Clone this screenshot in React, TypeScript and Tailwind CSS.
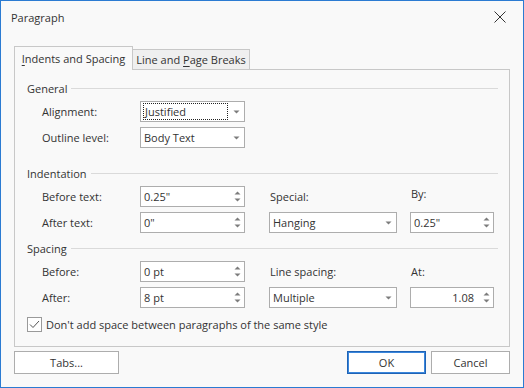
import React from "react";

const font = { fontFamily: '"Segoe UI", "Open Sans", "Noto Sans", sans-serif' };

const DownArrow = () => (
  <svg width="7" height="4" viewBox="0 0 7 4" className="block">
    <path d="M0.5 0.5 L6.5 0.5 L3.5 3.5 Z" fill="#7c7c7c" />
  </svg>
);

const SpinArrows = () => (
  <div className="flex h-full w-[14px] flex-col items-center justify-center gap-[3px]">
    <svg width="7" height="4" viewBox="0 0 7 4" className="block">
      <path d="M0.5 3.5 L6.5 3.5 L3.5 0.5 Z" fill="#7c7c7c" />
    </svg>
    <svg width="7" height="4" viewBox="0 0 7 4" className="block">
      <path d="M0.5 0.5 L6.5 0.5 L3.5 3.5 Z" fill="#7c7c7c" />
    </svg>
  </div>
);

const Dropdown = ({ value, width, focused }: { value: string; width: string; focused?: boolean }) => (
  <div className={`flex h-[21px] items-center border border-[#adadad] bg-white ${width}`}>
    {focused ? (
      <div className="ml-[2px] flex h-[17px] flex-1 items-center border border-dotted border-[#222] pl-[1px]">
        {value}
      </div>
    ) : (
      <div className="flex-1 pl-[3px]">{value}</div>
    )}
    <div className="flex w-[16px] justify-center">
      <DownArrow />
    </div>
  </div>
);

const Spinner = ({ value, width, right }: { value: string; width: string; right?: boolean }) => (
  <div className={`flex h-[21px] items-center border border-[#adadad] bg-white ${width}`}>
    <div className={`flex-1 ${right ? "pr-[5px] text-right" : "pl-[3px]"}`}>{value}</div>
    <SpinArrows />
  </div>
);

const GroupHeader = ({ title, className }: { title: string; className: string }) => (
  <div className={`flex h-[16px] items-center pl-[12px] pr-[11px] ${className}`}>
    <span>{title}</span>
    <div className="ml-[4px] h-px flex-1 bg-[#dadada]" />
  </div>
);

export default function App() {
  return (
    <div
      className="flex h-[388px] w-[524px] flex-col border border-[#2b7bd2] bg-[#f9f9f9] text-[11px] leading-none text-[#333]"
      style={font}
    >
      <div className="flex h-[32px] items-center justify-between pl-[10px] pr-[17px]">
        <span className="text-[#333]">Paragraph</span>
        <svg width="12" height="12" viewBox="0 0 12 12">
          <path d="M0.5 0.5 L11.5 11.5 M11.5 0.5 L0.5 11.5" stroke="#333" strokeWidth="1" />
        </svg>
      </div>

      <div className="mx-[13px] mt-[13px] flex h-[23px] items-end">
        <div className="relative z-10 mb-[-1px] flex h-[24px] w-[119px] items-center justify-center border border-b-0 border-[#c8c8c8] bg-[#f9f9f9]">
          <span>
            <span className="underline underline-offset-2">I</span>ndents and Spacing
          </span>
        </div>
        <div className="flex h-[20px] w-[117px] items-center justify-center border border-b-0 border-l-0 border-[#c8c8c8] bg-[#efefef]">
          <span>
            Line and <span className="underline underline-offset-2">P</span>age Breaks
          </span>
        </div>
      </div>

      <div className="mx-[13px] flex h-[278px] flex-col border border-[#c8c8c8] bg-[#f9f9f9]">
        <GroupHeader title="General" className="mt-[10px]" />
        <div className="mt-[5px] flex h-[21px] items-center pl-[27px]">
          <span className="w-[98px]">Alignment:</span>
          <Dropdown value="Justified" width="w-[105px]" focused />
        </div>
        <div className="mt-[5px] flex h-[21px] items-center pl-[27px]">
          <span className="w-[98px]">Outline level:</span>
          <Dropdown value="Body Text" width="w-[105px]" />
        </div>

        <GroupHeader title="Indentation" className="mt-[17px]" />
        <div className="mt-[5px] flex h-[21px] items-center pl-[27px]">
          <span className="w-[98px]">Before text:</span>
          <Spinner value={'0.25"'} width="w-[105px]" />
          <span className="ml-[24px] w-[128px] pl-[1px]">Special:</span>
          <span className="mb-[7px] ml-[13px] pl-[1px]">By:</span>
        </div>
        <div className="mt-[5px] flex h-[21px] items-center pl-[27px]">
          <span className="w-[98px]">After text:</span>
          <Spinner value={'0"'} width="w-[105px]" />
          <div className="ml-[24px]">
            <Dropdown value="Hanging" width="w-[128px]" />
          </div>
          <div className="ml-[13px]">
            <Spinner value={'0.25"'} width="w-[84px]" />
          </div>
        </div>

        <GroupHeader title="Spacing" className="mt-[7px]" />
        <div className="mt-[5px] flex h-[21px] items-center pl-[27px]">
          <span className="w-[98px]">Before:</span>
          <Spinner value="0 pt" width="w-[105px]" />
          <span className="ml-[24px] w-[128px] pl-[1px]">Line spacing:</span>
          <span className="ml-[13px] pl-[1px]">At:</span>
        </div>
        <div className="mt-[5px] flex h-[21px] items-center pl-[27px]">
          <span className="w-[98px]">After:</span>
          <Spinner value="8 pt" width="w-[105px]" />
          <div className="ml-[24px]">
            <Dropdown value="Multiple" width="w-[128px]" />
          </div>
          <div className="ml-[13px]">
            <Spinner value="1.08" width="w-[84px]" right />
          </div>
        </div>

        <div className="mt-[9px] flex h-[15px] items-center pl-[12px]">
          <div className="flex h-[15px] w-[15px] items-center justify-center border border-[#9a9a9a] bg-white">
            <svg width="11" height="9" viewBox="0 0 11 9">
              <path d="M1 4.5 L4 7.5 L10 1" fill="none" stroke="#555" strokeWidth="1" />
            </svg>
          </div>
          <span className="ml-[4px]">Don't add space between paragraphs of the same style</span>
        </div>
      </div>

      <div className="mx-[13px] mt-[4px] flex h-[23px] items-center">
        <button className="flex h-[23px] w-[105px] items-center justify-center border border-[#adadad] bg-white text-[#333]">
          Tabs...
        </button>
        <div className="flex-1" />
        <button className="flex h-[23px] w-[79px] items-center justify-center border border-[#1f63b5] bg-white text-[#333] shadow-[inset_0_0_0_1px_#3a86dc]">
          OK
        </button>
        <button className="ml-[5px] flex h-[23px] w-[79px] items-center justify-center border border-[#adadad] bg-white text-[#333]">
          Cancel
        </button>
      </div>
    </div>
  );
}
